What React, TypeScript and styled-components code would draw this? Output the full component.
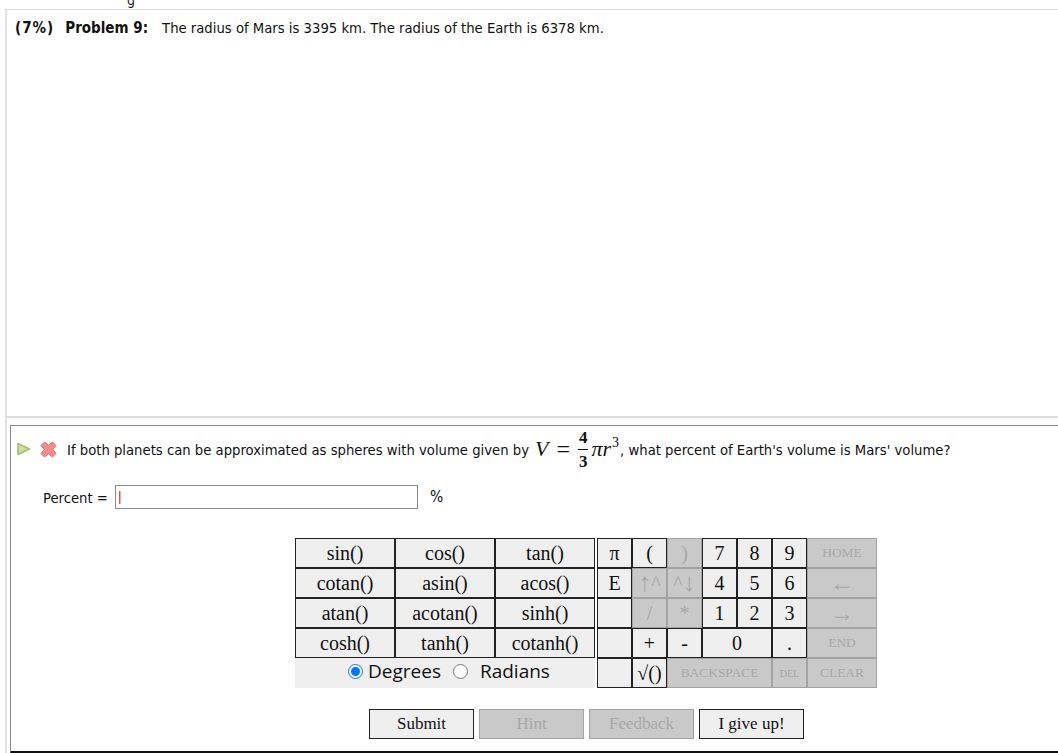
import type { ReactNode } from "react";
import styled, { createGlobalStyle } from "styled-components";

const GlobalStyle = createGlobalStyle`
  html, body {
    margin: 0;
    padding: 0;
    background: #fff;
    overflow: hidden;
  }
  body {
    font-family: "DejaVu Sans Condensed", "Open Sans", sans-serif;
    color: #111;
  }
`;

const Page = styled.div`
  width: 1058px;
  height: 753px;
  overflow: hidden;
`;

const ClippedLine = styled.div`
  height: 9px;
  overflow: hidden;
  padding-left: 127px;
  font-size: 14px;
  line-height: 0px;
  color: #222;
`;

const Sheet = styled.div`
  margin-left: 5px;
  border-left: 2px solid #e2e2e2;
  border-top: 1px solid #dcdcdc;
`;

const ProblemArea = styled.div`
  height: 408px;
  box-sizing: border-box;
  padding: 8px 0 0 8px;
  border-bottom: 2px solid #dedede;
  font-size: 14.7px;
  line-height: 20px;
`;

const Score = styled.strong`
  font-weight: 700;
  font-size: 15px;
  letter-spacing: 1px;
  margin-right: 11px;
`;

const Label = styled.strong`
  font-weight: 700;
  font-size: 15px;
  margin-right: 14px;
`;

const Part = styled.div`
  margin: 7px 0 0 3px;
  height: 329px;
  border: 1px solid #888;
  border-right: none;
  border-bottom: 3px solid #111;
  box-sizing: border-box;
`;

const QuestionRow = styled.div`
  display: flex;
  align-items: center;
  height: 46px;
  padding-left: 5px;
  font-size: 14.7px;
`;

const Icon = styled.svg`
  flex: none;
  display: block;
`;

const IconGap = styled.span`
  flex: none;
  width: 8px;
`;

const QuestionText = styled.span`
  display: flex;
  align-items: center;
  margin-left: 10px;
  white-space: pre;
`;

const MathText = styled.span`
  display: inline-flex;
  align-items: center;
  font-family: "Liberation Serif", serif;
  font-size: 20px;
  color: #111;
  margin: 0 1px 0 6px;
`;

const MathVar = styled.i`
  font-size: 22px;
`;

const Equals = styled.span`
  margin: 0 5px 0 8px;
  font-size: 24px;
`;

const Fraction = styled.span`
  display: inline-flex;
  flex-direction: column;
  align-items: center;
  font-size: 17px;
  font-weight: 700;
  line-height: 23px;
  margin: 0 3px 0 3px;
`;

const Numerator = styled.span`
  border-bottom: 1px solid #111;
  padding: 0 1px;
`;

const Sup = styled.sup`
  font-size: 14px;
  font-style: normal;
  line-height: 0;
  vertical-align: 9px;
  margin-left: 1px;
`;

const AnswerRow = styled.div`
  display: flex;
  align-items: center;
  height: 24px;
  margin-top: 13px;
  padding-left: 32px;
  font-size: 14.7px;
`;

const AnswerLabel = styled.span`
  width: 72px;
  flex: none;
`;

const InputWrap = styled.span`
  position: relative;
  display: block;
  width: 303px;
  height: 24px;
  flex: none;
`;

const AnswerInput = styled.input`
  width: 100%;
  height: 100%;
  box-sizing: border-box;
  border: 1px solid #8a8a8a;
  padding: 0;
  margin: 0;
  display: block;
  background: #fff;
  caret-color: transparent;
  outline: none;
`;

const Caret = styled.span`
  position: absolute;
  left: 4px;
  top: 6px;
  width: 1px;
  height: 13px;
  background: #f2590c;
  box-shadow: 1px 0 0 #f7a8c4;
`;

const Unit = styled.span`
  margin-left: 12px;
  font-size: 15.5px;
`;

const Pad = styled.div`
  display: flex;
  gap: 2px;
  margin: 29px 0 0 284px;
  font-family: "Liberation Serif", serif;
`;

const FunctionColumn = styled.div`
  width: 300px;
`;

const FunctionGrid = styled.div`
  display: grid;
  grid-template-columns: repeat(3, 100px);
  grid-auto-rows: 30px;
`;

const Key = styled.div<{ $off?: boolean; $span?: number; $size?: number }>`
  box-sizing: border-box;
  display: flex;
  align-items: center;
  justify-content: center;
  background: ${({ $off }) => ($off ? "#c9c9c9" : "#efefef")};
  border: 1px solid ${({ $off }) => ($off ? "#a3a3a3" : "#222")};
  color: ${({ $off }) => ($off ? "#a8a8a8" : "#111")};
  font-size: ${({ $size }) => $size ?? 20}px;
  grid-column: span ${({ $span }) => $span ?? 1};
  overflow: hidden;
  white-space: nowrap;
`;

const Arrow = styled.span`
  font-size: 26px;
  line-height: 20px;
`;

const AngleRow = styled.div`
  height: 30px;
  padding: 0 0 4px 8px;
  box-sizing: border-box;
  background: #efefef;
  display: flex;
  align-items: center;
  justify-content: center;
  font-family: "Open Sans", sans-serif;
  font-size: 19px;
  color: #111;
`;

const AngleRadio = styled.input<{ $gap: number }>`
  width: 15px;
  height: 15px;
  margin: 0 ${({ $gap }) => $gap}px 0 0;
`;

const AngleLabel = styled.label`
  display: flex;
  align-items: center;
  margin-right: 12px;
  &:last-child {
    margin-right: 0;
  }
`;

const NumberGrid = styled.div`
  display: grid;
  grid-template-columns: repeat(6, 35px) 70px;
  grid-auto-rows: 30px;
`;

const ActionRow = styled.div`
  display: flex;
  gap: 5px;
  margin: 21px 0 0 358px;
  font-family: "Liberation Serif", serif;
`;

const ActionButton = styled.button<{ $off?: boolean }>`
  width: 105px;
  height: 30px;
  box-sizing: border-box;
  padding: 0;
  font-family: inherit;
  font-size: 17px;
  background: ${({ $off }) => ($off ? "#c9c9c9" : "#efefef")};
  color: ${({ $off }) => ($off ? "#a8a8a8" : "#111")};
  border: 1px solid ${({ $off }) => ($off ? "#a3a3a3" : "#222")};
`;

const functionKeys = [
  "sin()", "cos()", "tan()",
  "cotan()", "asin()", "acos()",
  "atan()", "acotan()", "sinh()",
  "cosh()", "tanh()", "cotanh()",
];

type PadKey = { label: ReactNode; off?: boolean; span?: number; size?: number };

const padKeys: PadKey[] = [
  { label: "π" }, { label: "(" }, { label: ")", off: true },
  { label: "7" }, { label: "8" }, { label: "9" }, { label: "HOME", off: true, size: 13.4 },
  { label: "E" }, { label: <><Arrow>↑</Arrow>^</>, off: true }, { label: <>^<Arrow>↓</Arrow></>, off: true },
  { label: "4" }, { label: "5" }, { label: "6" }, { label: "←", off: true, size: 24 },
  { label: "" }, { label: "/", off: true }, { label: "*", off: true },
  { label: "1" }, { label: "2" }, { label: "3" }, { label: "→", off: true, size: 24 },
  { label: "" }, { label: "+" }, { label: "-" },
  { label: "0", span: 2 }, { label: "." }, { label: "END", off: true, size: 13.4 },
  { label: "" }, { label: "√()" }, { label: "BACKSPACE", off: true, span: 3, size: 13.4 },
  { label: "DEL", off: true, size: 10 }, { label: "CLEAR", off: true, size: 13.4 },
];

function PlayIcon() {
  return (
    <Icon width="16" height="14" viewBox="0 0 16 14">
      <path d="M2 1.5 L13.5 7 L2 12.5 Z" fill="#c9e09a" stroke="#a3bf70" strokeWidth="1.6" strokeLinejoin="round" />
    </Icon>
  );
}

function CrossIcon() {
  return (
    <Icon width="17" height="17" viewBox="0 0 17 17">
      <path
        d="M4.5 1 L8.5 4.2 L12.5 1 L16 4.5 L12.8 8.5 L16 12.5 L12.5 16 L8.5 12.8 L4.5 16 L1 12.5 L4.2 8.5 L1 4.5 Z"
        fill="#f48a8a"
        stroke="#e77070"
        strokeWidth="1"
        strokeLinejoin="round"
      />
    </Icon>
  );
}

export default function App() {
  return (
    <Page>
      <GlobalStyle />
      <ClippedLine>g</ClippedLine>
      <Sheet>
        <ProblemArea>
          <Score>(7%)</Score>
          <Label>Problem 9:</Label>
          The radius of Mars is 3395 km. The radius of the Earth is 6378 km.
        </ProblemArea>
        <Part>
          <QuestionRow>
            <PlayIcon />
            <IconGap />
            <CrossIcon />
            <QuestionText>
              If both planets can be approximated as spheres with volume given by
              <MathText>
                <MathVar>V</MathVar>
                <Equals>=</Equals>
                <Fraction>
                  <Numerator>4</Numerator>
                  <span>3</span>
                </Fraction>
                <MathVar>
                  πr<Sup>3</Sup>
                </MathVar>
              </MathText>
              , what percent of Earth's volume is Mars' volume?
            </QuestionText>
          </QuestionRow>
          <AnswerRow>
            <AnswerLabel>Percent =</AnswerLabel>
            <InputWrap>
              <AnswerInput readOnly />
              <Caret />
            </InputWrap>
            <Unit>%</Unit>
          </AnswerRow>
          <Pad>
            <FunctionColumn>
              <FunctionGrid>
                {functionKeys.map((k) => (
                  <Key key={k}>{k}</Key>
                ))}
              </FunctionGrid>
              <AngleRow>
                <AngleLabel>
                  <AngleRadio $gap={5} type="radio" name="angle" defaultChecked />
                  Degrees
                </AngleLabel>
                <AngleLabel>
                  <AngleRadio $gap={7} type="radio" name="angle" />
                  &nbsp;Radians
                </AngleLabel>
              </AngleRow>
            </FunctionColumn>
            <NumberGrid>
              {padKeys.map((k, i) => (
                <Key key={i} $off={k.off} $span={k.span} $size={k.size}>
                  {k.label}
                </Key>
              ))}
            </NumberGrid>
          </Pad>
          <ActionRow>
            <ActionButton>Submit</ActionButton>
            <ActionButton $off>Hint</ActionButton>
            <ActionButton $off>Feedback</ActionButton>
            <ActionButton>I give up!</ActionButton>
          </ActionRow>
        </Part>
      </Sheet>
    </Page>
  );
}
